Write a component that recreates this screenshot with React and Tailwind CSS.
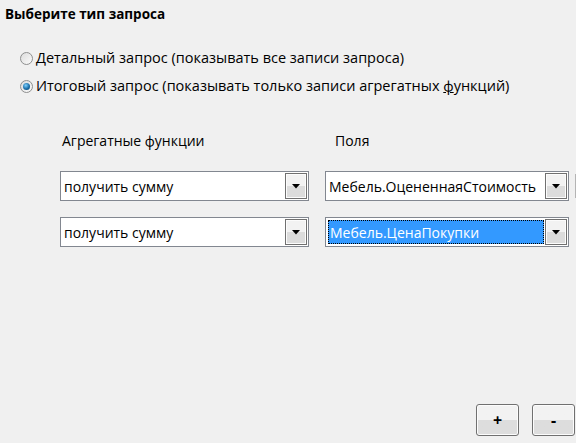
import React from 'react';

function DropButton() {
  return (
    <div className="flex h-full w-[22px] shrink-0 items-center justify-center border border-[#707070] bg-gradient-to-b from-[#f2f2f2] from-50% to-[#dcdcdc] to-50% shadow-[inset_0_0_0_1px_#fcfcfc]">
      <svg width="8" height="5" viewBox="0 0 8 5" className="mt-[1px]">
        <path d="M0 0h8L4 4.5z" fill="#000" />
      </svg>
    </div>
  );
}

function Combo({ value, width, selected }) {
  return (
    <div className={`flex h-[30px] items-stretch border border-[#828790] bg-white p-[1px] text-[14px] ${width}`}>
      <div className="flex flex-1 items-center p-[1px]">
        {selected ? (
          <div className="flex h-full w-full items-center border border-dotted border-black bg-[#3399ff] pl-[1px] text-white">
            {value}
          </div>
        ) : (
          <div className="pl-[1px]">{value}</div>
        )}
      </div>
      <DropButton />
    </div>
  );
}

function Radio({ checked, children }) {
  return (
    <div className="flex h-[28px] items-center gap-[3px]">
      <div className="flex h-[13px] w-[13px] items-center justify-center rounded-full border border-[#8e8f8f] bg-gradient-to-br from-[#dcdcdc] to-[#fbfbfb]">
        {checked && (
          <div className="h-[7px] w-[7px] rounded-full bg-[radial-gradient(circle_at_40%_35%,#7fd1ff,#1a6ea8_55%,#0b3f66)]" />
        )}
      </div>
      <span>{children}</span>
    </div>
  );
}

function SmallButton({ children }) {
  return (
    <button className="flex h-[32px] w-[43px] items-center justify-center rounded-[3px] border border-[#707070] bg-gradient-to-b from-[#f2f2f2] from-50% to-[#dddddd] to-50% text-[16px] font-bold leading-none text-black shadow-[inset_0_0_0_1px_#fcfcfc]">
      {children}
    </button>
  );
}

export default function App() {
  return (
    <div className="flex h-[443px] w-[576px] flex-col overflow-hidden bg-[#f0f0f0] font-['Open_Sans','Noto_Sans',sans-serif] text-[14.5px] text-black">
      <div className="pl-[5px] pt-[5px] text-[13.5px] font-bold leading-[18px]">Выберите тип запроса</div>

      <div className="mt-[21px] flex flex-col pl-[20px]">
        <Radio>
          <span className="underline">Д</span>етальный запрос (показывать все записи запроса)
        </Radio>
        <Radio checked>
          Итоговый запрос (показывать только записи агрегатных <span className="underline">ф</span>ункций)
        </Radio>
      </div>

      <div className="mt-[32px] flex pl-[62px] text-[14px] leading-[18px]">
        <div className="w-[273px]">Агрегатные функции</div>
        <div>Поля</div>
      </div>

      <div className="mt-[21px] flex flex-col gap-[16px] pl-[60px]">
        <div className="flex items-center">
          <Combo width="w-[249px]" value="получить сумму" />
          <Combo width="ml-[16px] w-[244px]" value="Мебель.ОцененнаяСтоимость" />
          <div className="ml-[6px] h-[24px] w-[1px] bg-[#b4b4b4]" />
        </div>
        <div className="flex items-center">
          <Combo width="w-[249px]" value="получить сумму" />
          <Combo width="ml-[16px] w-[244px]" value="Мебель.ЦенаПокупки" selected />
        </div>
      </div>

      <div className="flex-1" />

      <div className="flex justify-end gap-[13px] pb-[7px] pr-[1px]">
        <SmallButton>+</SmallButton>
        <SmallButton>-</SmallButton>
      </div>
    </div>
  );
}
